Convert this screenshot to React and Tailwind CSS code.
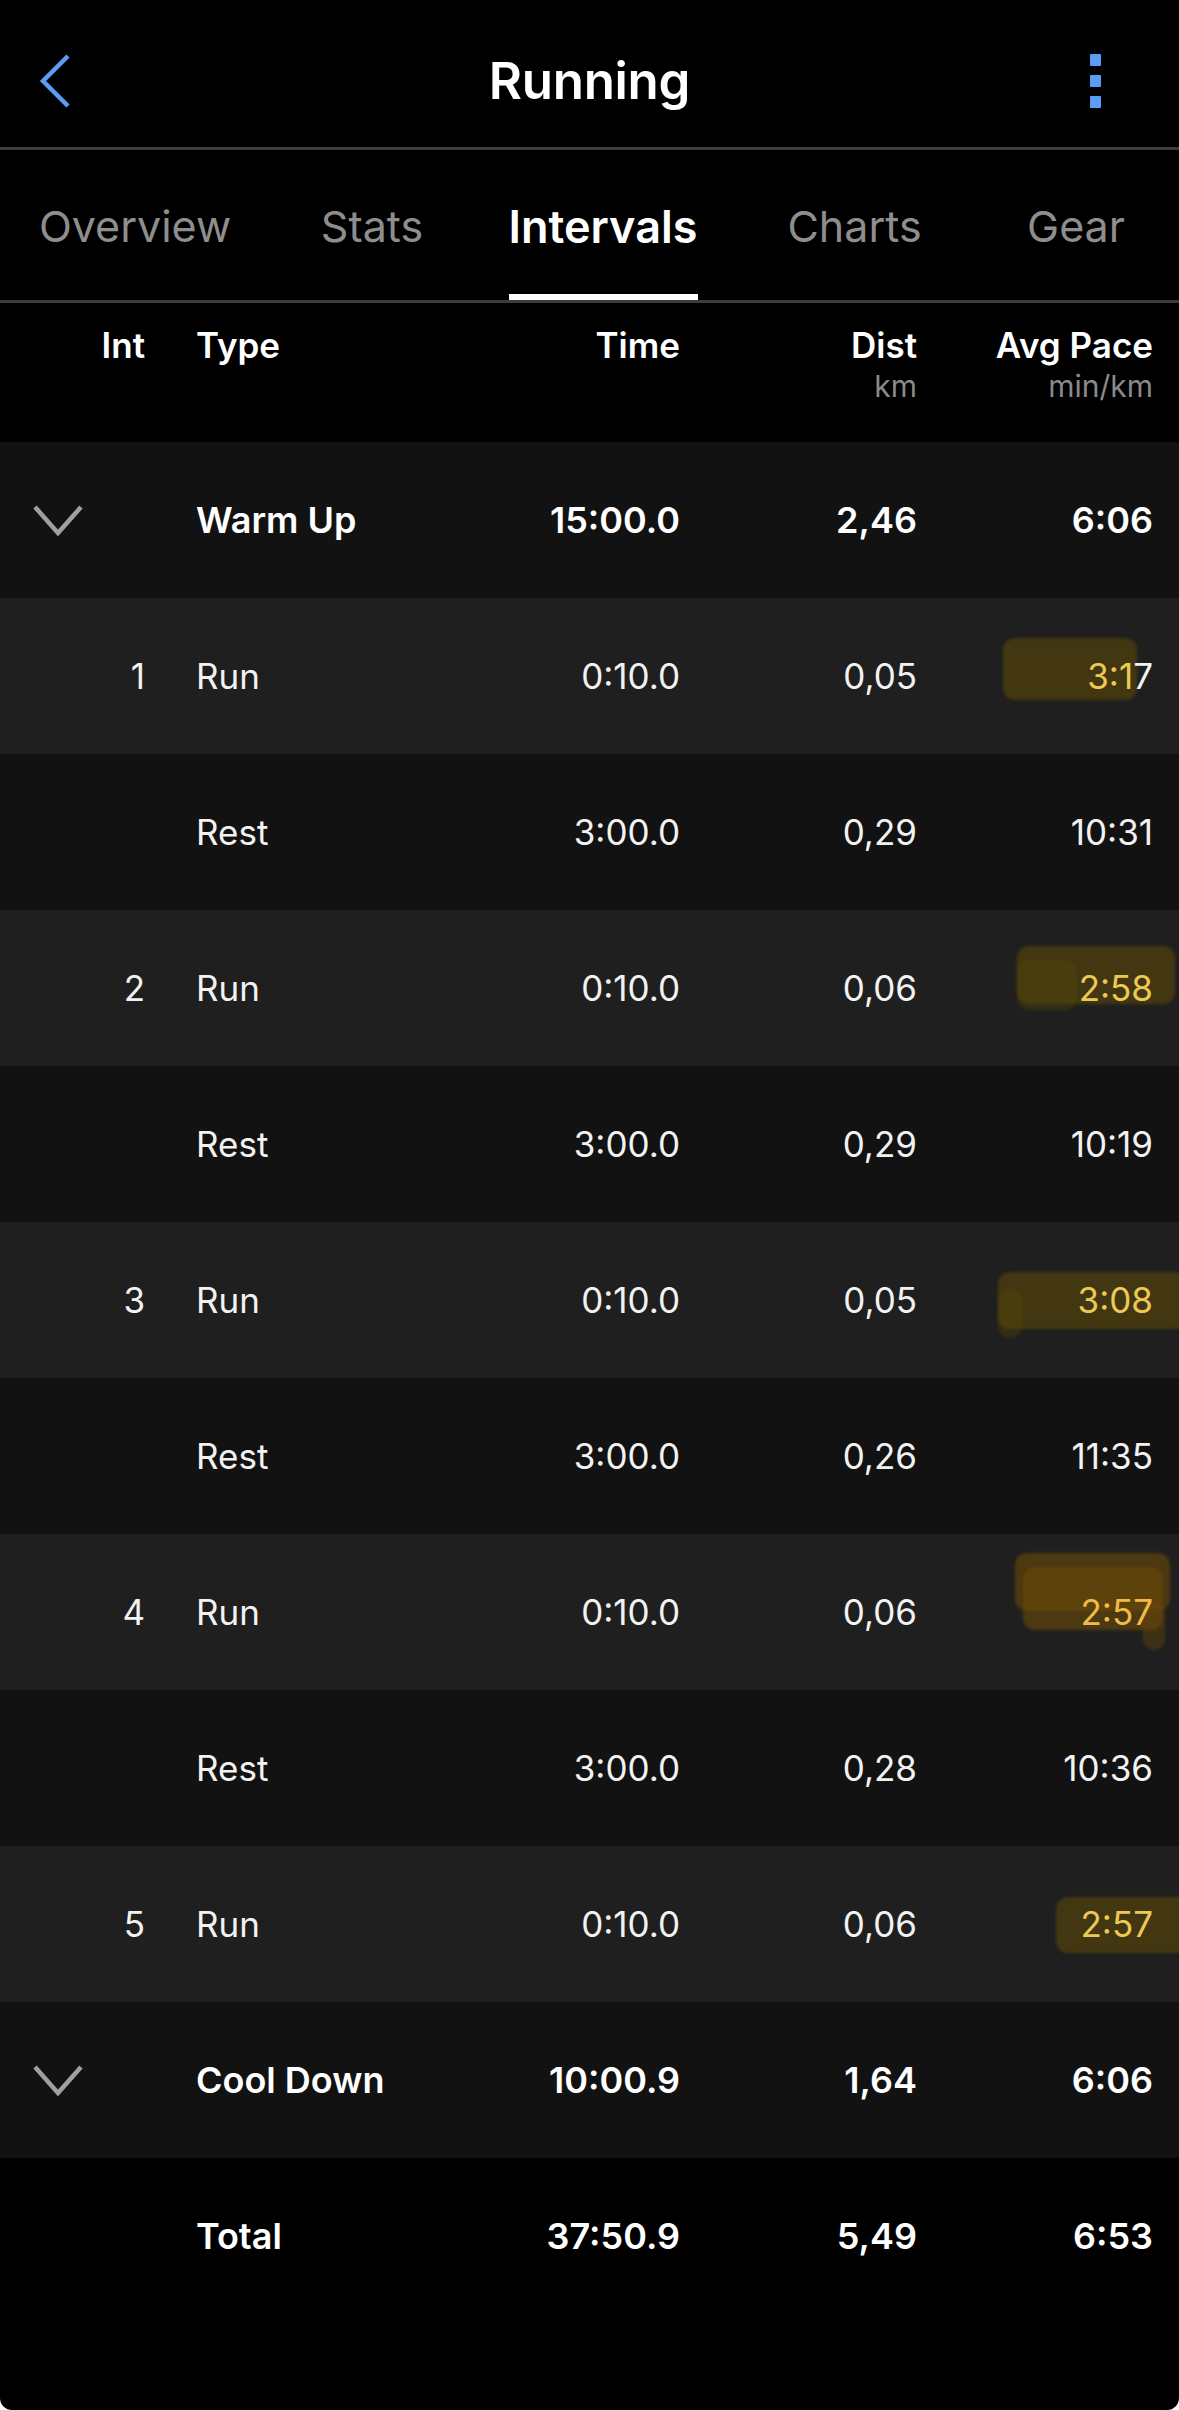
import React from "react";

const FONT = { fontFamily: "Inter, 'Noto Sans', 'Liberation Sans', sans-serif" };

const HL = "absolute rounded-[12px] blur-[1.5px]";

const rows = [
  { kind: "group", label: "Warm Up", time: "15:00.0", dist: "2,46", pace: "6:06" },
  {
    kind: "run", n: 1, time: "0:10.0", dist: "0,05", pace: ["3:1", "7"],
    marks: ["left-[1003px] top-[40px] w-[134px] h-[62px]"],
  },
  { kind: "rest", time: "3:00.0", dist: "0,29", pace: "10:31" },
  {
    kind: "run", n: 2, time: "0:10.0", dist: "0,06", pace: ["2:58", ""],
    marks: [
      "left-[1017px] top-[36px] w-[158px] h-[58px]",
      "left-[1017px] top-[50px] w-[60px] h-[50px] opacity-60",
    ],
  },
  { kind: "rest", time: "3:00.0", dist: "0,29", pace: "10:19" },
  {
    kind: "run", n: 3, time: "0:10.0", dist: "0,05", pace: ["3:08", ""],
    marks: [
      "left-[998px] top-[50px] w-[190px] h-[57px]",
      "left-[998px] top-[66px] w-[24px] h-[50px] opacity-60",
    ],
  },
  { kind: "rest", time: "3:00.0", dist: "0,26", pace: "11:35" },
  {
    kind: "run", n: 4, time: "0:10.0", dist: "0,06", pace: ["2:57", ""], orange: true,
    marks: [
      "left-[1015px] top-[19px] w-[155px] h-[58px]",
      "left-[1023px] top-[33px] w-[140px] h-[63px]",
      "left-[1143px] top-[70px] w-[22px] h-[46px] opacity-70",
    ],
  },
  { kind: "rest", time: "3:00.0", dist: "0,28", pace: "10:36" },
  {
    kind: "run", n: 5, time: "0:10.0", dist: "0,06", pace: ["2:57", ""],
    marks: ["left-[1056px] top-[51px] w-[140px] h-[56px]"],
  },
  { kind: "group", label: "Cool Down", time: "10:00.9", dist: "1,64", pace: "6:06" },
];

const Chevron = () => (
  <svg width="52" height="32" viewBox="0 0 52 32" fill="none">
    <polyline points="3,3 26,29 49,3" stroke="#a0a0a0" strokeWidth="4.5" strokeLinejoin="miter" />
  </svg>
);

const GRID = "grid grid-cols-[145px_285px_250px_237px_236px] pr-[26px]";

function Row({ r }) {
  const bold = r.kind === "group";
  const bg = r.kind === "run" ? "bg-[#1f1f1f]" : "bg-[#121212]";
  const text = bold ? "font-semibold text-[36px] text-white" : "text-[35px] text-[#f2f2f2]";
  return (
    <div className={`relative h-[156px] items-center overflow-hidden ${GRID} ${bg} ${text} leading-none`}>
      {r.marks &&
        r.marks.map((m, i) => (
          <div key={i} className={`${HL} ${r.orange ? "bg-[#6a4a08]/60" : "bg-[#5a4808]/60"} ${m}`} />
        ))}
      <div className={bold ? "pl-[32px] flex items-center" : "text-right"}>
        {bold ? <Chevron /> : r.n || ""}
      </div>
      <div className="pl-[51px]">{r.label || (r.kind === "run" ? "Run" : "Rest")}</div>
      <div className="text-right">{r.time}</div>
      <div className="text-right">{r.dist}</div>
      <div className="relative text-right">
        {Array.isArray(r.pace) ? (
          <>
            <span className={r.orange ? "text-[#f2bb45]" : "text-[#ecc954]"}>{r.pace[0]}</span>
            <span>{r.pace[1]}</span>
          </>
        ) : (
          r.pace
        )}
      </div>
    </div>
  );
}

const tabs = [
  { label: "Overview", w: "w-[270px]" },
  { label: "Stats", w: "w-[204px]" },
  { label: "Intervals", w: "w-[258px]", active: true },
  { label: "Charts", w: "w-[245px]" },
  { label: "Gear", w: "w-[198px]" },
];

export default function App() {
  return (
    <div className="w-[1179px] h-[2410px] bg-white" style={FONT}>
      <div className="h-[2410px] bg-black rounded-b-[12px] overflow-hidden">
        {/* nav bar */}
        <div className="h-[147px] grid grid-cols-[1fr_auto_1fr] items-center pt-[14px]">
          <div className="pl-[38px] flex">
            <svg width="34" height="54" viewBox="0 0 34 54" fill="none">
              <polyline points="30,2 5,27 30,52" stroke="#5b9df2" strokeWidth="4.5" />
            </svg>
          </div>
          <div className="text-[51px] font-semibold text-white leading-none tracking-[-0.3px]">Running</div>
          <div className="flex justify-end pr-[78px]">
            <div className="flex flex-col gap-[9px]">
              <div className="w-[11px] h-[12px] bg-[#5b9df2] rounded-[1px]" />
              <div className="w-[11px] h-[12px] bg-[#5b9df2] rounded-[1px]" />
              <div className="w-[11px] h-[12px] bg-[#5b9df2] rounded-[1px]" />
            </div>
          </div>
        </div>
        <div className="h-[3px] bg-[#3c3c3c]" />

        {/* tabs */}
        <div className="h-[150px] flex">
          {tabs.map((t) => (
            <div key={t.label} className={`${t.w} shrink-0 flex justify-center`}>
              <div className="flex flex-col h-full">
                <div
                  className={`flex-1 flex items-center pt-[8px] leading-none ${
                    t.active ? "text-[45px] text-white font-semibold" : "text-[43px] text-[#8e8e8e]"
                  }`}
                >
                  {t.label}
                </div>
                <div className={`h-[6px] ${t.active ? "bg-white" : ""}`} />
              </div>
            </div>
          ))}
        </div>
        <div className="h-[3px] bg-[#3c3c3c]" />

        {/* table header */}
        <div className={`h-[139px] ${GRID} pt-[25px] items-start text-white font-semibold text-[35px] leading-none`}>
          <div className="text-right">Int</div>
          <div className="pl-[51px]">Type</div>
          <div className="text-right">Time</div>
          <div className="flex flex-col items-end">
            <div>Dist</div>
            <div className="mt-[8px] text-[30px] font-normal text-[#8a8a8a]">km</div>
          </div>
          <div className="flex flex-col items-end">
            <div>Avg Pace</div>
            <div className="mt-[8px] text-[30px] font-normal text-[#8a8a8a]">min/km</div>
          </div>
        </div>

        {rows.map((r, i) => (
          <Row key={i} r={r} />
        ))}

        {/* total */}
        <div className={`h-[156px] items-center ${GRID} text-white font-semibold text-[36px] leading-none`}>
          <div />
          <div className="pl-[51px]">Total</div>
          <div className="text-right">37:50.9</div>
          <div className="text-right">5,49</div>
          <div className="text-right">6:53</div>
        </div>
      </div>
    </div>
  );
}
